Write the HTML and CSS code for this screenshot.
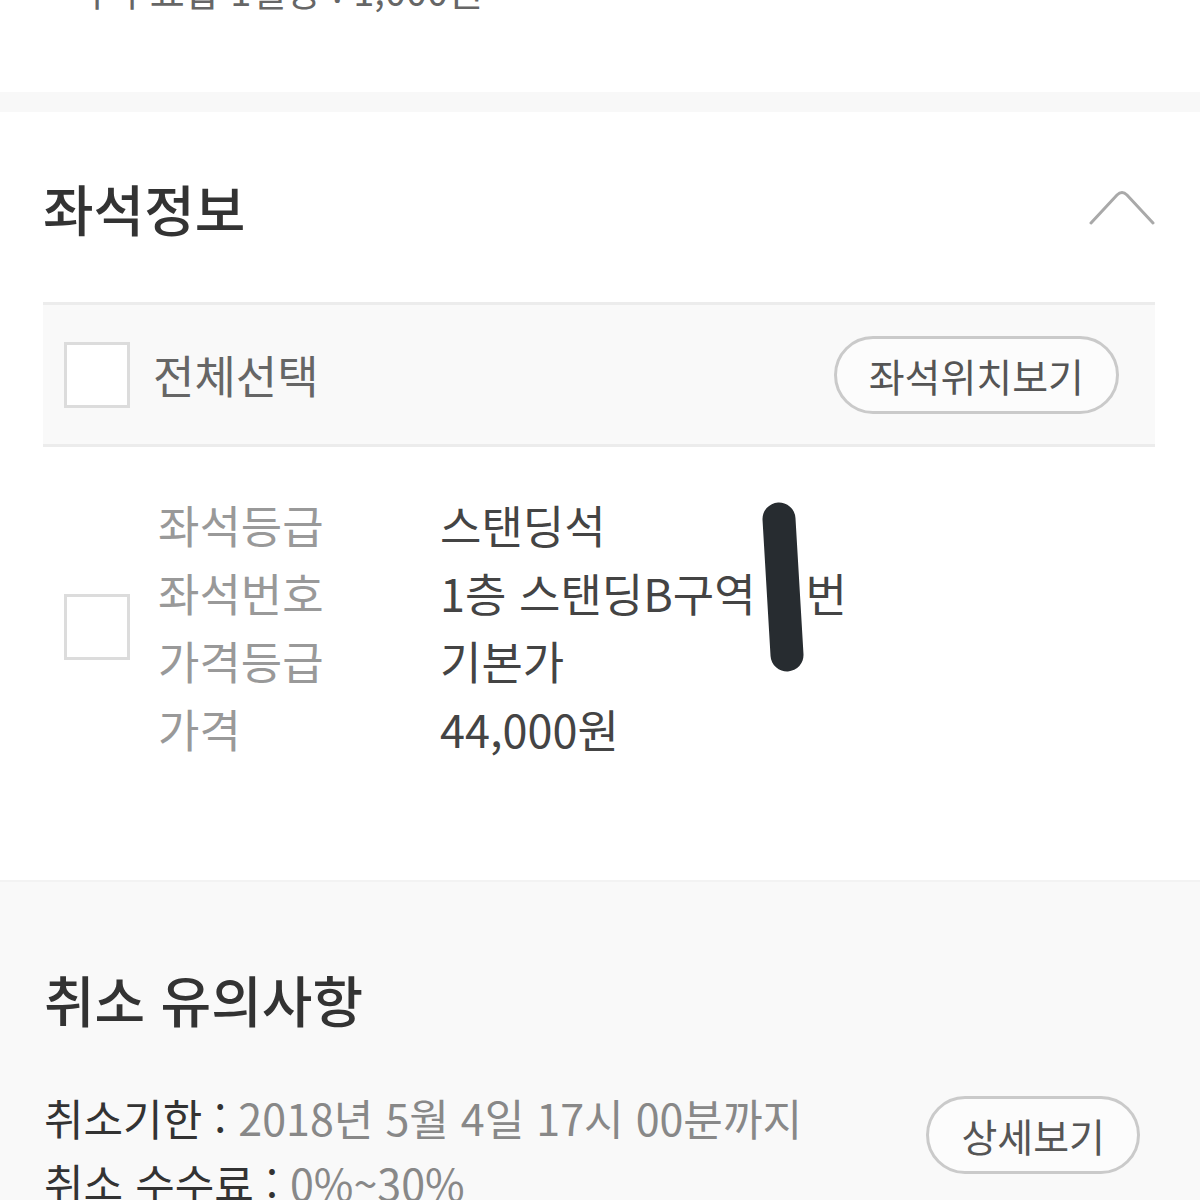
FILE: index.html
```html
<!DOCTYPE html>
<html lang="ko">
<head>
<meta charset="UTF-8">
<meta name="viewport" content="width=device-width, initial-scale=1.0">
<title>좌석정보</title>
<link rel="stylesheet" href="styles.css">
</head>
<body>
  <div class="top-note">
    <p>- 수수료합 1일당 : 1,000원</p>
  </div>
  <div class="band"></div>

  <section class="seat">
    <div class="section-head">
      <h2>좌석정보</h2>
      <svg class="chevron" width="66" height="36" viewBox="0 0 66 36">
        <path d="M2 34 L28 6 Q33 1 38 6 L64 34" fill="none" stroke="#a9a9a9" stroke-width="3" stroke-linecap="round"/>
      </svg>
    </div>

    <div class="seat-table">
      <div class="table-head">
        <span class="check"></span>
        <span class="select-all">전체선택</span>
        <button class="pill">좌석위치보기</button>
      </div>

      <div class="seat-row">
        <span class="check"></span>
        <dl class="seat-info">
          <dt>좌석등급</dt><dd>스탠딩석</dd>
          <dt>좌석번호</dt><dd>1층 스탠딩B구역<span class="masked"></span>번</dd>
          <dt>가격등급</dt><dd>기본가</dd>
          <dt>가격</dt><dd>44,000원</dd>
        </dl>
        <!-- marker scribble over the seat number -->
        <svg class="scribble" width="60" height="190" viewBox="0 0 60 190">
          <path d="M24 20 L32 156" stroke="#272c30" stroke-width="33" stroke-linecap="round"/>
        </svg>
      </div>
    </div>
  </section>

  <section class="cancel">
    <h2>취소 유의사항</h2>
    <div class="cancel-body">
      <div class="cancel-lines">
        <p><span class="key">취소기한 :</span> 2018년 5월 4일 17시 00분까지</p>
        <p><span class="key">취소 수수료 :</span> 0%~30%</p>
      </div>
      <button class="pill">상세보기</button>
    </div>
  </section>
</body>
</html>
```

FILE: styles.css
```css
body {
  margin: 0;
  background-color: #fff;
  font-family: "Noto Sans CJK KR", "Noto Sans", sans-serif;
  color: #333;
}

.top-note {
  height: 92px;
  overflow: hidden;
  padding-left: 56px;
}

.top-note p {
  margin: -30px 0 0;
  font-size: 38px;
  line-height: 40px;
  color: #666;
}

.band {
  height: 20px;
  background-color: #f8f8f8;
}

/* seat info section */
.seat {
  padding: 0 45px 0 43px;
  height: 768px;
}

.section-head {
  height: 190px;
  display: flex;
  align-items: center;
  justify-content: space-between;
}

.section-head h2,
.cancel h2 {
  margin: 0;
  font-size: 55px;
  line-height: 60px;
  font-weight: 500;
  color: #333;
}

.seat-table {
  border-top: 3px solid #ececec;
}

.table-head {
  height: 139px;
  display: flex;
  align-items: center;
  padding: 0 36px 0 21px;
  background-color: #f9f9f9;
  border-bottom: 3px solid #ececec;
}

.check {
  width: 60px;
  height: 60px;
  border: 3px solid #dcdcdc;
  background-color: #fff;
  flex: none;
}

.select-all {
  margin-left: 23px;
  font-size: 45px;
  color: #666;
  flex: 1;
}

.pill {
  height: 78px;
  padding: 0 32px;
  border: 3px solid #cacaca;
  border-radius: 40px;
  background-color: #fcfcfc;
  font-family: inherit;
  font-size: 39px;
  color: #555;
}

.seat-row {
  position: relative;
  display: flex;
  align-items: center;
  padding: 44px 0 0 21px;
  height: 272px;
}

.seat-info {
  margin: 0 0 0 28px;
  display: grid;
  grid-template-columns: 282px auto;
  font-size: 45px;
  line-height: 68px;
}

.seat-info dt {
  color: #999;
}

.seat-info dd {
  margin: 0;
  color: #444;
}

.masked {
  display: inline-block;
  width: 50px;
}

.scribble {
  position: absolute;
  left: 712px;
  top: 52px;
}

/* cancel notes */
.cancel {
  background-color: #f9f9f9;
  border-top: 2px solid #f3f3f3;
  padding: 86px 60px 40px 44px;
}

.cancel-body {
  display: flex;
  align-items: flex-start;
  justify-content: space-between;
  margin-top: 57px;
}

.cancel-lines p {
  margin: 0;
  font-size: 43px;
  line-height: 65px;
  color: #888;
}

.cancel-lines .key {
  color: #333;
}

.cancel-body .pill {
  margin-top: 11px;
}
```
